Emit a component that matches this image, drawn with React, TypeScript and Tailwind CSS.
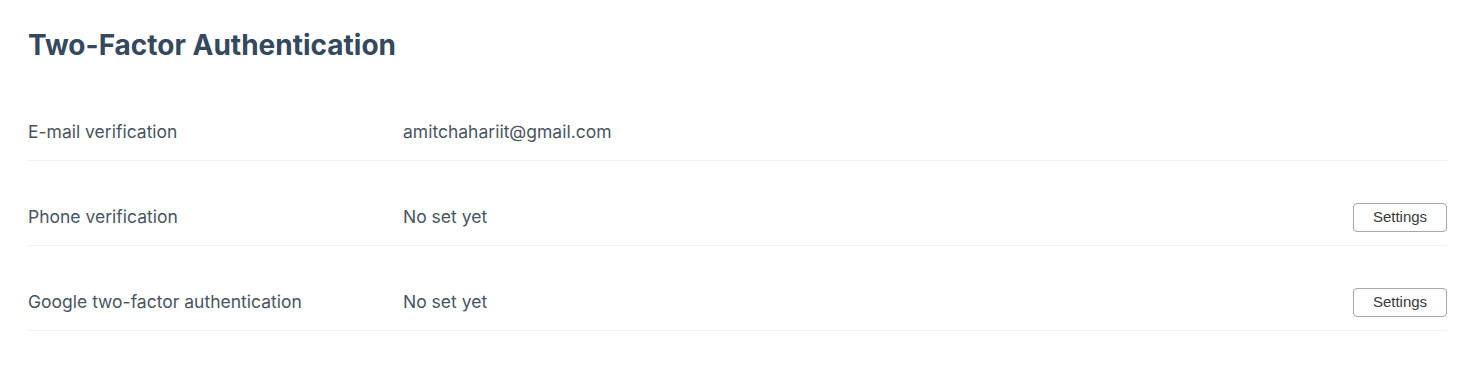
import React from 'react'

interface VerifyRow {
  label: string
  value: string
  canSet: boolean
}

const rows: VerifyRow[] = [
  { label: 'E-mail verification', value: 'amitchahariit@gmail.com', canSet: false },
  { label: 'Phone verification', value: 'No set yet', canSet: true },
  { label: 'Google two-factor authentication', value: 'No set yet', canSet: true },
]

export default function App() {
  return (
    <div className="min-h-[376px] bg-white pl-[28px] pr-[27px] pt-[28px] font-['Inter','Noto_Sans',sans-serif]">
      <h2 className="text-[28px] font-bold leading-[34px] text-[#34495e]">Two-Factor Authentication</h2>

      <div className="mt-[14px]">
        {rows.map((row) => (
          <div key={row.label} className="flex items-center border-b border-[#f1f2f4] pt-[41px] pb-[13px]">
            <div className="w-[375px] text-[17.5px] leading-[30px] text-[#4a5561]">{row.label}</div>
            <div className="flex-1 text-[17.5px] leading-[30px] text-[#4a5561]">{row.value}</div>
            {row.canSet && (
              <button className="h-[29px] w-[94px] rounded-[4px] border border-[#a8a8a8] bg-white font-['Liberation_Sans',Arial,sans-serif] text-[15px] text-[#3a3a3a]">
                Settings
              </button>
            )}
          </div>
        ))}
      </div>
    </div>
  )
}
